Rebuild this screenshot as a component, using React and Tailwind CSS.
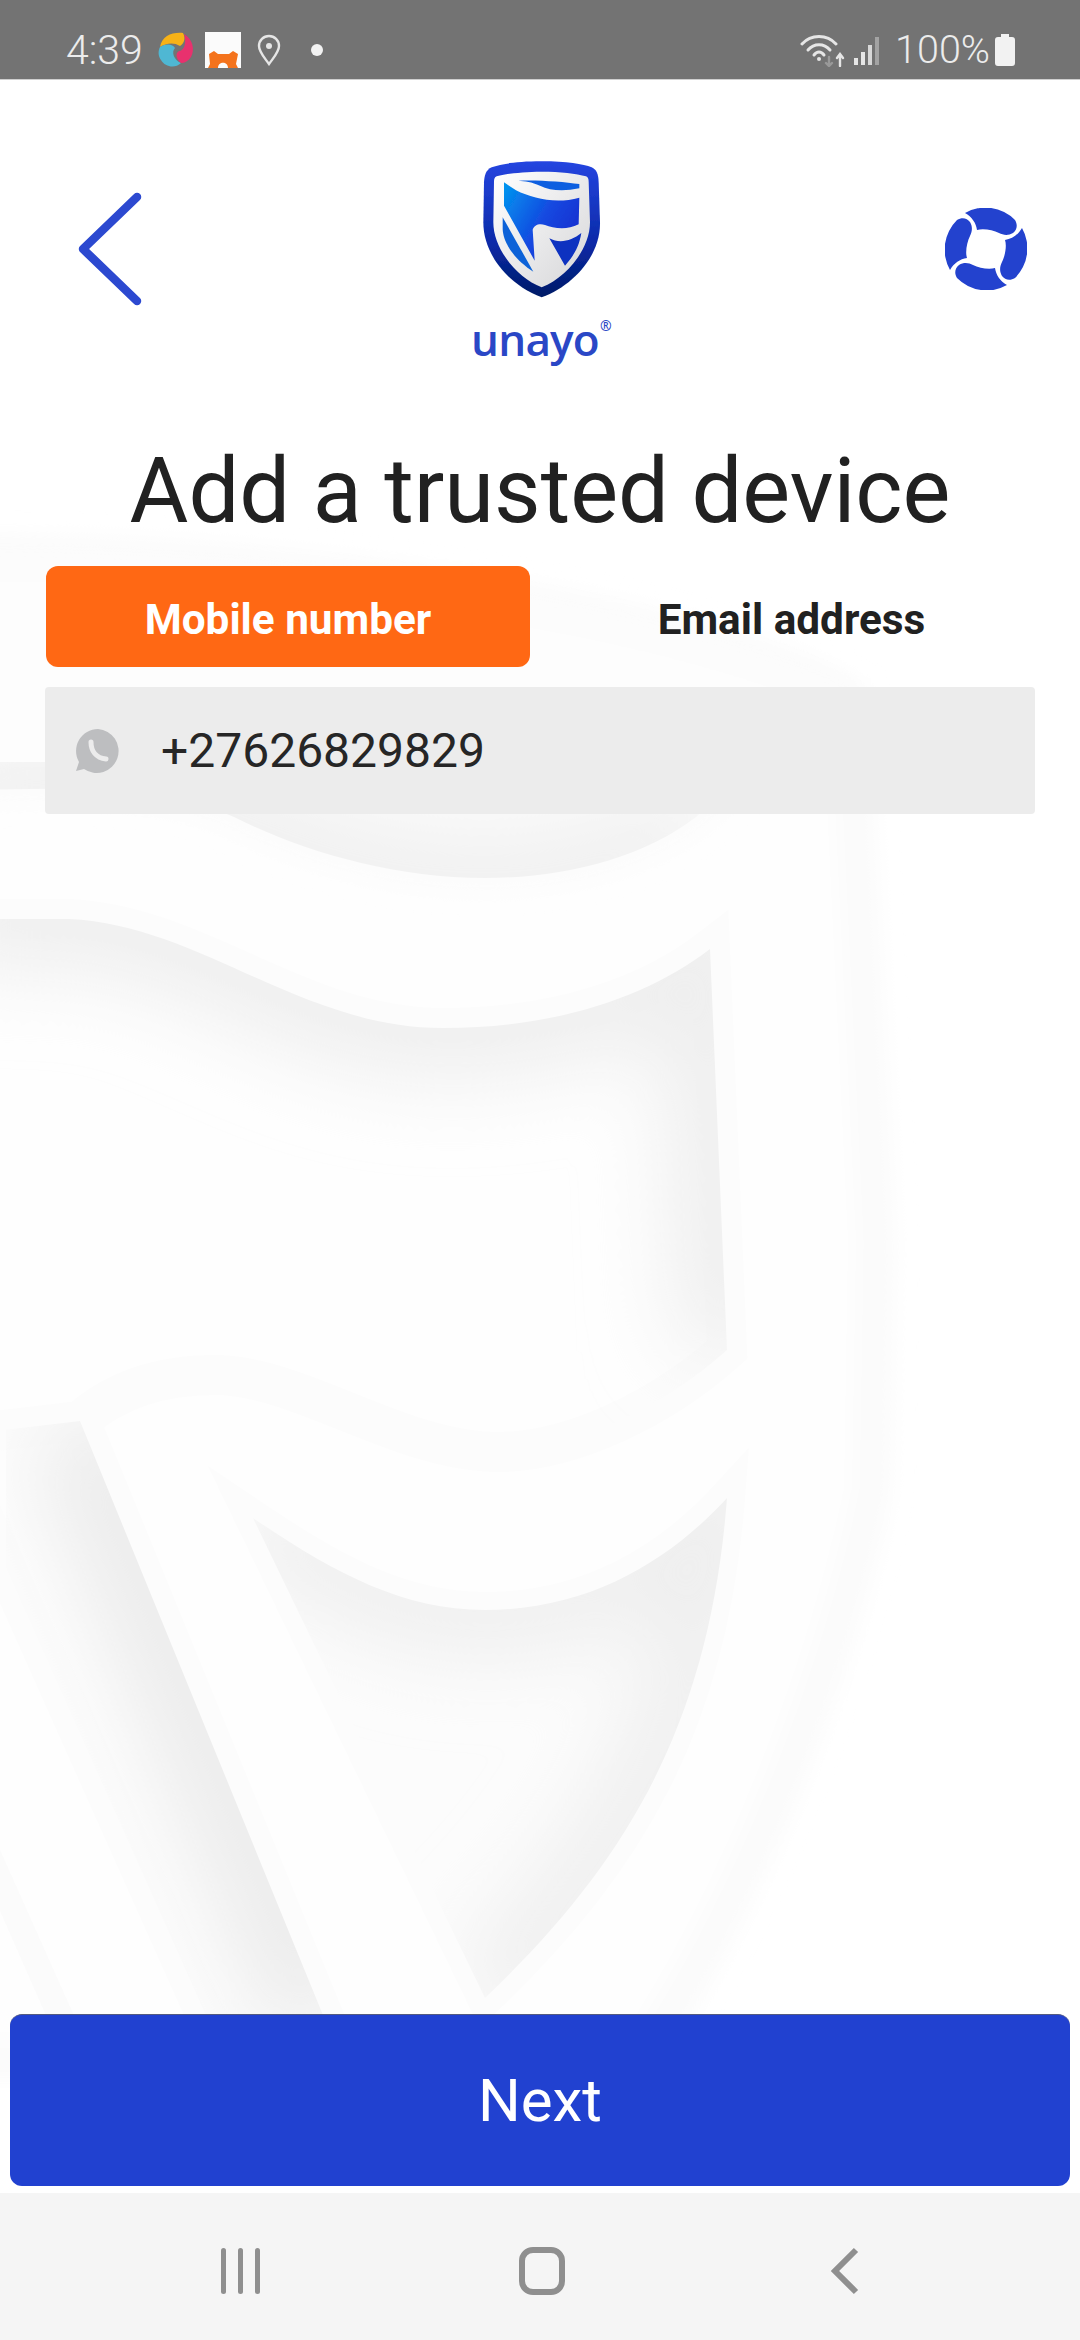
import React from "react";

const flag = "M-60 919 L69 919 C200 925 300 1028 443 1028 C560 1028 650 995 710 949 L727 1350 C660 1410 570 1452 498 1452 C400 1452 300 1375 215 1375 C160 1375 115 1390 80 1421 L-60 1450 Z";
const flagEdge = "M-60 919 L69 919 C200 925 300 1028 443 1028 C560 1028 650 995 710 949 L727 1350";
const tri = "M253 1518 C330 1570 400 1610 485 1610 C590 1610 670 1560 727 1498 C710 1720 630 1860 485 1998 Z";
const triEdge = "M253 1518 C330 1570 400 1610 485 1610 C590 1610 670 1560 727 1498 C710 1720 630 1860 485 1998";
const left = "M-80 1440 L80 1421 L325 2020 L208 2020 L-60 1420 Z";
const top = "M-60 560 C300 555 650 610 835 690 L696 817 C640 860 560 878 485 878 C390 878 300 850 234 817 C150 780 70 790 -60 790 Z";
const topEdge = "M-60 790 C70 790 150 780 234 817 C300 850 390 878 485 878 C560 878 640 860 696 817";
const outer = "M-40 555 C298 548 746 625 850 700 L876 1240 L872 1490 C840 1650 760 1880 640 2060 L-40 2060 Z";

function Watermark() {
  return (
    <svg className="absolute inset-0" width="1080" height="2340" viewBox="0 0 1080 2340">
      <defs>
        <filter id="b30" x="-30%" y="-30%" width="160%" height="160%"><feGaussianBlur stdDeviation="42" /></filter>
        <filter id="b8" x="-30%" y="-30%" width="160%" height="160%"><feGaussianBlur stdDeviation="10" /></filter>
        <clipPath id="cf"><path d={flag} /></clipPath>
        <clipPath id="ct"><path d={tri} /></clipPath>
        <clipPath id="cl"><path d={left} /></clipPath>
        <clipPath id="cp"><path d={top} /></clipPath>
      </defs>
      <path d={outer} fill="#fefefe" stroke="#fbfbfb" strokeWidth="40" filter="url(#b8)" />
      <path d={top} fill="#fdfdfd" stroke="#fcfcfc" strokeWidth="30" filter="url(#b8)" />
      <g clipPath="url(#cp)"><path d={topEdge} fill="none" stroke="#efefef" strokeWidth="90" filter="url(#b30)" /></g>
      <path d={flag} fill="#fefefe" stroke="#fcfcfc" strokeWidth="40" />
      <g clipPath="url(#cf)"><path d={flagEdge} fill="none" stroke="#eeeeee" strokeWidth="100" filter="url(#b30)" /></g>
      <path d={left} fill="#fdfdfd" stroke="#fcfcfc" strokeWidth="40" />
      <g clipPath="url(#cl)"><path d="M80 1421 L325 2020" fill="none" stroke="#ececec" strokeWidth="120" filter="url(#b30)" /></g>
      <path d="M-40 1760 L76 2020 L48 2020 L-40 1820 Z" fill="#fbfbfb" />
      <path d={tri} fill="#fcfcfc" stroke="#fcfcfc" strokeWidth="36" />
      <g clipPath="url(#ct)"><path d={triEdge} fill="none" stroke="#eeeeee" strokeWidth="90" filter="url(#b30)" /></g>
    </svg>
  );
}

function StatusBar() {
  return (
    <div className="relative h-[80px] bg-[#737373] border-b border-[#cfcfcf] flex items-center justify-between pl-[66px] pr-[65px] pt-[21px] text-[#ececec]">
      <div className="flex items-center">
        <span className="text-[41px] leading-none font-light">4:39</span>
        <svg width="40" height="40" viewBox="0 0 40 40" className="ml-[13px]">
          <path d="M4 17 C6 6 16 2 27 3 C30 8 28 14 24 16 C18 12 10 13 4 17Z" fill="#f7b217" />
          <path d="M4 17 C10 13 17 14 19 18 C15 22 18 30 25 33 C19 39 9 37 5 30 C2 26 2 21 4 17Z" fill="#4fb7d3" />
          <path d="M28 4 C37 9 39 20 35 27 C32 31 29 33 25 33 C20 29 19 23 23 21 C28 21 31 13 28 4Z" fill="#e8316e" />
        </svg>
        <svg width="36" height="36" viewBox="0 0 36 36" className="ml-[9px]">
          <rect width="36" height="36" fill="#fbfbfb" />
          <path d="M4 22 L9 19 L13 22 L24 22 L28 19 L33 22 L31 32 L33 36 L23 36 C23 29 13 29 13 36 L3 36 L5 32Z" fill="#f4731c" />
        </svg>
        <svg width="24" height="32" viewBox="0 0 24 32" className="ml-[16px]" fill="none" stroke="#e6e6e6" strokeWidth="2.4">
          <path d="M12 30 C7 23 2 18 2 12 A10 10 0 0 1 22 12 C22 18 17 23 12 30Z" />
          <circle cx="12" cy="12" r="3" fill="#e6e6e6" stroke="none" />
        </svg>
        <span className="ml-[30px] w-[12px] h-[12px] rounded-full bg-[#f2f2f2]" />
      </div>
      <div className="flex items-center">
        <svg width="48" height="34" viewBox="0 0 48 34" fill="none" stroke="#e6e6e6" strokeWidth="3" strokeLinecap="round">
          <path d="M2 11 C11 1 27 1 36 11" />
          <path d="M8 17 C14 10 24 10 30 17" />
          <path d="M14 22 C17 18 21 18 24 22" />
          <circle cx="19" cy="26" r="2" fill="#e6e6e6" stroke="none" />
          <path d="M29 24 L29 33 M26 30 L29 33 L32 30" stroke="#999" strokeWidth="2.4" />
          <path d="M40 33 L40 22 M37 25 L40 21 L43 25" strokeWidth="2.4" />
        </svg>
        <svg width="30" height="32" viewBox="0 0 30 32" className="ml-[5px]">
          <rect x="1" y="24" width="4" height="7" fill="#e6e6e6" />
          <rect x="8" y="18" width="4" height="13" fill="#e6e6e6" />
          <rect x="15" y="11" width="4" height="20" fill="#d8d8d8" />
          <rect x="22" y="3" width="4" height="28" fill="#a3a3a3" />
        </svg>
        <span className="ml-[12px] text-[39.5px] leading-none font-light">100%</span>
        <svg width="20" height="32" viewBox="0 0 20 32" className="ml-[5px]">
          <path d="M6 0 H14 V3 H17 Q20 3 20 6 V29 Q20 32 17 32 H3 Q0 32 0 29 V6 Q0 3 3 3 H6Z" fill="#f2f2f2" />
        </svg>
      </div>
    </div>
  );
}

function Logo() {
  return (
    <svg width="180" height="150" viewBox="0 0 540 450" className="block shrink-0">
      <defs>
        <linearGradient id="rim" x1="0" y1="0" x2="0" y2="1">
          <stop offset="0" stopColor="#2545e0" />
          <stop offset="0.6" stopColor="#0a2aa8" />
          <stop offset="1" stopColor="#001a66" />
        </linearGradient>
        <linearGradient id="inner" x1="0" y1="0" x2="1" y2="1">
          <stop offset="0" stopColor="#ffffff" />
          <stop offset="1" stopColor="#d6d6d8" />
        </linearGradient>
        <linearGradient id="blue" x1="0" y1="0" x2="1" y2="0.6">
          <stop offset="0" stopColor="#0098f0" />
          <stop offset="0.6" stopColor="#1448e0" />
          <stop offset="1" stopColor="#1230d0" />
        </linearGradient>
        <filter id="soft" x="-5%" y="-5%" width="110%" height="110%"><feGaussianBlur stdDeviation="2" /></filter>
      </defs>
      <g filter="url(#soft)">
        <path d="M275 37 C200 37 150 45 125 55 C108 62 103 80 102 100 L100 220 C100 320 180 410 275 445 C370 410 452 320 450 220 L446 100 C445 75 440 62 425 55 C400 45 350 37 275 37Z" fill="url(#rim)" />
        <path d="M275 68 C220 68 170 74 140 82 C134 84 132 90 132 98 L130 220 C130 300 200 385 275 415 C350 385 420 300 420 220 L416 98 C416 90 414 84 408 82 C380 74 330 68 275 68Z" fill="url(#inner)" />
        <path d="M205 95 C260 92 340 98 388 105 L388 118 C340 128 300 125 270 110 C245 98 225 97 205 95Z" fill="#0f5fe0" />
        <path d="M162 100 L198 124 C250 150 320 165 388 146 L386 226 C350 245 310 238 285 228 C268 222 252 228 248 242 L254 335 L162 170Z" fill="url(#blue)" />
        <path d="M158 205 L250 368 C205 340 160 290 158 240Z" fill="#0a62d8" />
        <path d="M298 268 C330 285 365 275 394 252 C387 295 370 322 345 350Z" fill="#0d30c0" />
      </g>
    </svg>
  );
}

const seg = "M20 5 A41.5 41.5 0 0 1 70 12 C73 17 72 22 68 25 C63 28 58 27 54 25 C48 22 38 20 32 22 C31 15 27 9 20 5Z";

function HelpIcon() {
  return (
    <svg width="82" height="82" viewBox="0 0 82 82" fill="#2342ce">
      <path d={seg} />
      <path d={seg} transform="rotate(90 41 41)" />
      <path d={seg} transform="rotate(180 41 41)" />
      <path d={seg} transform="rotate(270 41 41)" />
    </svg>
  );
}

export default function App() {
  return (
    <div className="relative w-[1080px] h-[2340px] overflow-hidden bg-white flex flex-col font-['Roboto',sans-serif]">
      <Watermark />
      <StatusBar />
      <main className="relative flex-1 flex flex-col">
        <div className="grid grid-cols-[1fr_180px_1fr] h-[200px] mt-[69px]">
          <div className="flex items-center pl-[77px]">
            <svg width="66" height="116" viewBox="0 0 66 116" fill="none">
              <path d="M60 6 L6 58 L60 110" stroke="#2c49d0" strokeWidth="8.5" strokeLinecap="round" strokeLinejoin="round" />
            </svg>
          </div>
          <div className="flex flex-col items-center h-[200px]">
            <Logo />
            <div className="relative shrink-0 mt-[10px] h-[60px] flex items-center text-[#2a47c6] font-['Open_Sans',sans-serif] font-[650] text-[44px] leading-[60px] tracking-[-0.8px] -ml-[10px]">
              unayo
              <span className="absolute left-full top-[10px] ml-[1px] text-[14px] leading-none tracking-normal">®</span>
            </div>
          </div>
          <div className="flex items-center justify-end pr-[53px]">
            <HelpIcon />
          </div>
        </div>

        <h1 className="mt-[92px] h-[100px] text-center text-[90.3px] leading-[100px] font-normal text-[#212121]">Add a trusted device</h1>

        <div className="mt-[25px] flex pl-[46px] pr-[45px]">
          <div className="w-[484px] h-[101px] rounded-[12px] bg-[#ff6814] flex items-center justify-center text-white text-[42.3px] font-bold pt-[6px]">Mobile number</div>
          <div className="flex-1 ml-[18px] flex items-center justify-center text-[#212121] text-[42.3px] font-bold pt-[6px]">Email address</div>
        </div>

        <div className="mt-[20px] mx-[45px] h-[127px] rounded-[4px] bg-[#ececec] flex items-center pl-[30px]">
          <svg width="46" height="46" viewBox="0 0 46 46">
            <path d="M23 1 A22 22 0 1 1 9 41 L1 43 L4 34 A22 22 0 0 1 23 1Z" fill="#bdbec0" />
            <path d="M16 14 C16 23 21 30 31 31" fill="none" stroke="#ececec" strokeWidth="5" strokeLinecap="round" />
          </svg>
          <span className="ml-[40px] text-[48px] leading-none text-[#262626]">+27626829829</span>
        </div>

        <div className="flex-1" />

        <div className="mx-[10px] mb-[7px] h-[172px] rounded-[12px] bg-[#2141d0] border-t border-[#555c80] flex items-center justify-center text-white text-[60px]">Next</div>
      </main>

      <nav className="relative h-[147px] bg-[#f5f5f5] flex items-center justify-center">
        <div className="w-[639px] flex items-center justify-between pt-[8px]">
          <div className="flex gap-[12px]">
            <span className="w-[5px] h-[46px] rounded-full bg-[#8f8f8f]" />
            <span className="w-[5px] h-[46px] rounded-full bg-[#8f8f8f]" />
            <span className="w-[5px] h-[46px] rounded-full bg-[#8f8f8f]" />
          </div>
          <span className="w-[46px] h-[48px] rounded-[14px] border-[6px] border-[#8f8f8f] mr-[5px]" />
          <svg width="30" height="48" viewBox="0 0 30 48" fill="none">
            <path d="M26 3 L5 24 L26 45" stroke="#8f8f8f" strokeWidth="6" />
          </svg>
        </div>
      </nav>
    </div>
  );
}
